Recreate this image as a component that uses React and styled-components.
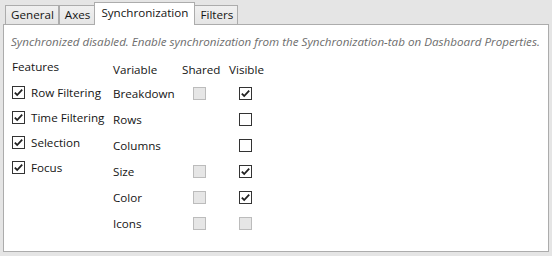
import React from "react";
import styled, { createGlobalStyle } from "styled-components";

const GlobalStyle = createGlobalStyle`
  html, body {
    margin: 0;
    padding: 0;
    background: #e5e5e5;
  }
  body {
    font-family: "Open Sans", "Noto Sans", sans-serif;
    font-size: 11.65px;
    color: #141414;
  }
`;

const Window = styled.div`
  width: 552px;
  height: 256px;
  box-sizing: border-box;
  padding: 2px 3px 4px 3px;
  display: flex;
  flex-direction: column;
`;

const TabStrip = styled.div`
  position: relative;
  z-index: 1;
  display: flex;
  align-items: flex-end;
  height: 23px;
  padding-left: 2px;
  margin-bottom: -1px;
`;

const Tab = styled.div`
  box-sizing: border-box;
  display: flex;
  align-items: center;
  height: ${(p) => (p.$active ? "23px" : "19px")};
  margin-bottom: ${(p) => (p.$active ? "0" : "1px")};
  margin-left: ${(p) => (p.$active ? "-1px" : "0")};
  margin-right: ${(p) => (p.$active ? "-1px" : "0")};
  padding: ${(p) => (p.$active ? "0 6px 3px" : "0 4px 1px 5px")};
  border: 1px solid #acacac;
  border-bottom: none;
  background: ${(p) =>
    p.$active ? "#ffffff" : "linear-gradient(#f0f0f0, #e5e5e5)"};
  white-space: nowrap;
  position: relative;
  z-index: ${(p) => (p.$active ? 2 : 1)};
`;

const Panel = styled.div`
  flex: 1;
  background: #ffffff;
  border: 1px solid #acacac;
  padding: 9px 8px 0 7px;
`;

const Notice = styled.div`
  font-style: italic;
  color: #6d6d6d;
  line-height: 16px;
  white-space: nowrap;
`;

const Content = styled.div`
  display: flex;
  margin-top: 9px;
  padding-left: 1px;
`;

const FeatureList = styled.div`
  width: 101px;
  display: flex;
  flex-direction: column;
`;

const Header = styled.div`
  line-height: 16px;
  height: 16px;
  margin-bottom: 5px;
`;

const FeatureRow = styled.label`
  display: flex;
  align-items: center;
  gap: 6px;
  height: 25px;
  white-space: nowrap;
`;

const VariableGrid = styled.div`
  display: grid;
  grid-template-columns: 69px 47px 40px;
  grid-auto-rows: 26px;
  grid-template-rows: 21px;
  align-items: center;
`;

const Cell = styled.div`
  display: flex;
  align-items: center;
  white-space: nowrap;
  padding-left: ${(p) => p.$inset || 0}px;
`;

const Box = styled.span`
  box-sizing: border-box;
  flex: none;
  width: 13px;
  height: 13px;
  display: inline-flex;
  align-items: center;
  justify-content: center;
  border: 1px solid ${(p) => (p.$disabled ? "#bcbcbc" : "#333333")};
  background: ${(p) => (p.$disabled ? "#e6e6e6" : "#ffffff")};
`;

const CheckBox = ({ checked, disabled }) => (
  <Box $disabled={disabled}>
    {checked && (
      <svg width="11" height="11" viewBox="0 0 11 11">
        <path
          d="M1.8 5.6 L4.2 8 L9.2 2.6"
          fill="none"
          stroke="#212121"
          strokeWidth="1.8"
        />
      </svg>
    )}
  </Box>
);

const features = ["Row Filtering", "Time Filtering", "Selection", "Focus"];

const variables = [
  { name: "Breakdown", shared: true, visible: true },
  { name: "Rows", shared: null, visible: false },
  { name: "Columns", shared: null, visible: false },
  { name: "Size", shared: true, visible: true },
  { name: "Color", shared: true, visible: true },
  { name: "Icons", shared: true, visible: null },
];

const tabs = ["General", "Axes", "Synchronization", "Filters"];

export default function App() {
  return (
    <>
      <GlobalStyle />
      <Window>
        <TabStrip>
          {tabs.map((t) => (
            <Tab key={t} $active={t === "Synchronization"}>
              {t}
            </Tab>
          ))}
        </TabStrip>
        <Panel>
          <Notice>
            Synchronized disabled. Enable synchronization from the
            Synchronization-tab on Dashboard Properties.
          </Notice>
          <Content>
            <FeatureList>
              <Header>Features</Header>
              {features.map((f) => (
                <FeatureRow key={f}>
                  <CheckBox checked />
                  {f}
                </FeatureRow>
              ))}
            </FeatureList>
            <VariableGrid>
              <Cell>Variable</Cell>
              <Cell>Shared</Cell>
              <Cell>Visible</Cell>
              {variables.map((v) => (
                <React.Fragment key={v.name}>
                  <Cell>{v.name}</Cell>
                  <Cell $inset={11}>
                    {v.shared !== null && <CheckBox disabled />}
                  </Cell>
                  <Cell $inset={10}>
                    {v.visible === null ? (
                      <CheckBox disabled />
                    ) : (
                      <CheckBox checked={v.visible} />
                    )}
                  </Cell>
                </React.Fragment>
              ))}
            </VariableGrid>
          </Content>
        </Panel>
      </Window>
    </>
  );
}
